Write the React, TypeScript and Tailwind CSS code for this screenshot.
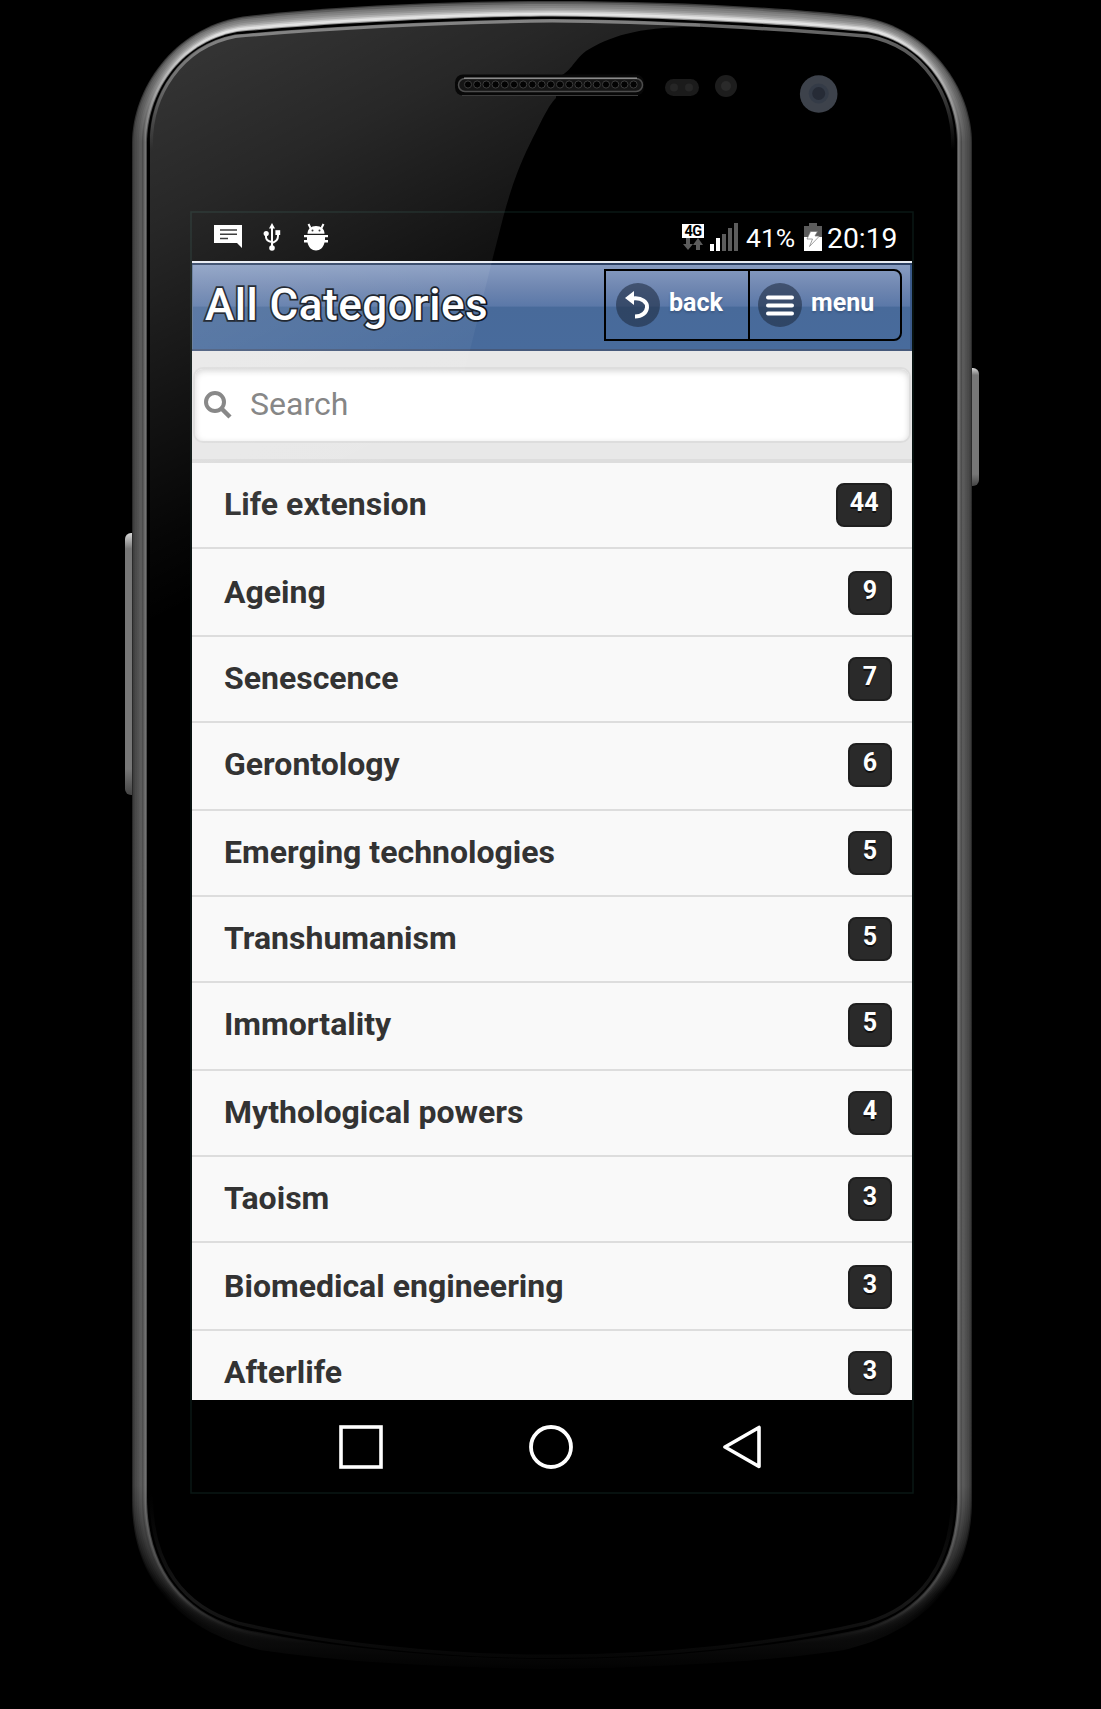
import { ReactNode } from "react";

interface ICategory {
  name: string;
  count: number;
  rowClass: string;
}

const SHORT_ROW = "h-[86px] pt-5";
const TALL_ROW = "h-[88px] pt-5";
const SHIFTED_ROW = "h-[88px] pt-[22px]";

const categories: ICategory[] = [
  { name: "Life extension", count: 44, rowClass: SHORT_ROW },
  { name: "Ageing", count: 9, rowClass: SHIFTED_ROW },
  { name: "Senescence", count: 7, rowClass: SHORT_ROW },
  { name: "Gerontology", count: 6, rowClass: TALL_ROW },
  { name: "Emerging technologies", count: 5, rowClass: SHORT_ROW },
  { name: "Transhumanism", count: 5, rowClass: SHORT_ROW },
  { name: "Immortality", count: 5, rowClass: TALL_ROW },
  { name: "Mythological powers", count: 4, rowClass: SHORT_ROW },
  { name: "Taoism", count: 3, rowClass: SHORT_ROW },
  { name: "Biomedical engineering", count: 3, rowClass: SHIFTED_ROW },
  { name: "Afterlife", count: 3, rowClass: SHORT_ROW },
];

// left half of the body outline, going from the bottom centre to the top centre
const OUTER = [
  [552, 1669], [477, 1668], [350, 1664], [260, 1650],
  [190, 1633], [132, 1590], [132, 1500],
  [132, 1100], [132, 500], [132, 143],
  [132, 90], [172, 28], [243, 16.5],
  [330, 6], [450, 1], [552, 1],
];
const INNER = [
  [552, 1659], [450, 1659], [330, 1648], [243, 1629],
  [185, 1613], [147, 1570], [147, 1497],
  [147, 1100], [147, 500], [147, 143],
  [147, 95], [178, 43], [237, 32],
  [320, 24], [450, 17], [552, 16.5],
];

function outline(t: number) {
  const left = OUTER.map(([x, y], i) => [
    x + (INNER[i][0] - x) * t,
    y + (INNER[i][1] - y) * t,
  ]);
  const right = left
    .slice(0, -1)
    .reverse()
    .map(([x, y]) => [1104 - x, y]);
  const [first, ...rest] = [...left, ...right];
  return `M${first.join(" ")}C${rest.map((p) => p.join(" ")).join(" ")}Z`;
}

// t, top, side, lower corner
const rim: [number, string, string, string][] = [
  [0, "#3a3a3a", "#2c2c2c", "#020202"],
  [0.08, "#5e5e5e", "#444444", "#060606"],
  [0.2, "#787878", "#4a4a4a", "#0c0c0c"],
  [0.32, "#868686", "#505050", "#121212"],
  [0.45, "#979797", "#585858", "#181818"],
  [0.56, "#acacac", "#5c5c5c", "#1e1e1e"],
  [0.66, "#cacaca", "#4c4c4c", "#282828"],
  [0.76, "#e4e4e4", "#626262", "#3a3a3a"],
  [0.84, "#dedede", "#767676", "#444444"],
  [0.93, "#8c8c8c", "#4a4a4a", "#2a2a2a"],
];

function PhoneBody() {
  return (
    <svg
      className="absolute inset-0"
      width="1101"
      height="1709"
      viewBox="0 0 1101 1709"
    >
      <defs>
        {rim.map(([t, top, side, low]) => (
          <linearGradient
            key={t}
            id={`rim-${t * 100}`}
            gradientUnits="userSpaceOnUse"
            x1="0"
            y1="0"
            x2="0"
            y2="1669"
          >
            <stop offset="0.02" stopColor={top} />
            <stop offset="0.085" stopColor={side} />
            <stop offset="0.89" stopColor={side} stopOpacity="0.85" />
            <stop offset="0.955" stopColor={low} />
            <stop offset="0.985" stopColor="#0a0a0a" />
            <stop offset="1" stopColor="#020202" />
          </linearGradient>
        ))}
        <linearGradient id="key" x1="0" y1="0" x2="0" y2="1">
          <stop offset="0" stopColor="#d8d8d8" />
          <stop offset="0.06" stopColor="#777777" />
          <stop offset="0.9" stopColor="#777777" />
          <stop offset="1" stopColor="#444444" />
        </linearGradient>
        <linearGradient
          id="edge"
          gradientUnits="userSpaceOnUse"
          x1="0"
          y1="0"
          x2="0"
          y2="1660"
        >
          <stop offset="0.012" stopColor="#6c6c6c" />
          <stop offset="0.05" stopColor="#4a4a4a" />
          <stop offset="0.09" stopColor="#000000" />
          <stop offset="0.9" stopColor="#000000" />
          <stop offset="0.965" stopColor="#181818" />
          <stop offset="1" stopColor="#050505" />
        </linearGradient>
      </defs>

      <rect x="125" y="533" width="14" height="262" rx="6" fill="url(#key)" />
      <rect x="965" y="368" width="14" height="118" rx="6" fill="url(#key)" />

      <path d={outline(0)} fill="#000000" />
      {rim.map(([t]) => (
        <path key={t} d={outline(t)} fill={`url(#rim-${t * 100})`} />
      ))}
      <path d={outline(1)} fill="#000000" />
      <path
        d={outline(1.28)}
        fill="#000000"
        stroke="url(#edge)"
        strokeWidth="3.5"
      />
    </svg>
  );
}

function Glass() {
  return (
    <svg
      className="pointer-events-none absolute inset-0"
      width="1101"
      height="1709"
      viewBox="0 0 1101 1709"
    >
      <defs>
        <linearGradient
          id="shine"
          gradientUnits="userSpaceOnUse"
          x1="200"
          y1="60"
          x2="416"
          y2="492"
        >
          <stop offset="0" stopColor="#ffffff" stopOpacity="0.2" />
          <stop offset="0.26" stopColor="#ffffff" stopOpacity="0.155" />
          <stop offset="0.61" stopColor="#ffffff" stopOpacity="0.075" />
          <stop offset="0.85" stopColor="#ffffff" stopOpacity="0.025" />
          <stop offset="1" stopColor="#ffffff" stopOpacity="0" />
        </linearGradient>
        <clipPath id="glass">
          <path d={outline(1.2)} />
        </clipPath>
      </defs>
      <rect
        x="191"
        y="212"
        width="722"
        height="1281"
        fill="none"
        stroke="#0a1714"
        strokeWidth="1.5"
      />
      <path
        clipPath="url(#glass)"
        fill="url(#shine)"
        d="M140 0H700V27C640 26 610 36 586 51C572 62 572 72 556 78V98C548 106 542 120 526 152C514 178 508 200 503 218L493 257L470 350L430 500L380 700H140Z"
      />

      <rect x="455" y="74.5" width="189" height="21" rx="8" fill="#080808" />
      <path d="M462 95.5H638" stroke="#3c3c3c" strokeWidth="1" />
      <rect
        x="458.5"
        y="78.5"
        width="184"
        height="13"
        rx="6.5"
        fill="#151515"
        stroke="#4d4d4d"
        strokeWidth="1.5"
      />
      <path d="M464 78.3H637" stroke="#8a8a8a" strokeWidth="1.5" />
      {Array.from({ length: 19 }, (_, i) => (
        <circle
          key={i}
          cx={468 + i * 9.2}
          cy="84.5"
          r="3.6"
          fill="#030303"
          stroke="#3d3d3d"
          strokeWidth="1"
        />
      ))}

      <rect x="665" y="79" width="34" height="17" rx="8.5" fill="#1b1b1b" />
      <circle cx="674" cy="87.5" r="4" fill="#262626" />
      <circle cx="689" cy="87.5" r="4" fill="#262626" />
      <circle cx="726" cy="86" r="11" fill="#1d1d1d" />
      <circle cx="726" cy="86" r="5" fill="#2a2a2a" />
      <circle cx="818.7" cy="94" r="18.8" fill="#3d424b" />
      <circle cx="818.7" cy="93.5" r="10" fill="#343b47" />
      <circle cx="818.7" cy="93.5" r="6.5" fill="#262b36" />
    </svg>
  );
}

function StatusBar() {
  return (
    <div className="flex h-12 items-start pt-[10px] pl-[22px] text-white">
      <svg width="28" height="24" viewBox="0 0 28 24" className="mt-0.5">
        <path d="M0 0H28V23L23 18H0Z" fill="#fff" />
        <path d="M6 5H23M6 9.3H23M6 13.6H14" stroke="#1f1f1f" strokeWidth="1.5" />
      </svg>
      <svg width="18" height="28" viewBox="0 0 18 28" className="ml-[21px]">
        <path
          d="M9 3V26M3 11V14Q3 18 9 19M15 10V13Q15 18 9 20"
          fill="none"
          stroke="#fff"
          strokeWidth="2"
        />
        <path d="M9 0L12 5.5H6Z" fill="#fff" />
        <circle cx="3.2" cy="10.5" r="2.6" fill="#fff" />
        <rect x="12.4" y="7.2" width="4.8" height="4.8" fill="#fff" />
        <circle cx="9" cy="25" r="2.8" fill="#fff" />
      </svg>
      <svg width="24" height="28" viewBox="0 0 24 28" className="ml-[23px]">
        <path d="M6.5 5L4.5 1M17.5 5L19.5 1" stroke="#fff" strokeWidth="2" />
        <path d="M3.5 10.8C3.5 6 7 3 12 3S20.5 6 20.5 10.8Z" fill="#fff" />
        <path
          d="M0 12H24V14.2H21V17H24V19.5H20.5C19.5 24.5 16 27.5 12 27.5S4.5 24.5 3.5 19.5H0V17H3V14.2H0Z"
          fill="#fff"
        />
        <circle cx="8.5" cy="7.6" r="1" fill="#222" />
        <circle cx="15.5" cy="7.6" r="1" fill="#222" />
      </svg>

      <div className="ml-[354px] flex w-[22px] flex-col items-center">
        <span className="mt-px h-[14px] w-full bg-white text-center text-[14.5px] leading-[15px] font-bold tracking-[-0.5px] text-black">
          4G
        </span>
        <svg width="20" height="13" viewBox="0 0 20 13">
          <path d="M3 0H7V6H10L5 12L0 6H3Z" fill="#5c5c5c" />
          <path d="M13 12V7H10L15 0L20 7H17V12Z" fill="#5c5c5c" />
        </svg>
      </div>
      <svg width="28" height="28" viewBox="0 0 28 28" className="ml-[6px]">
        <path d="M0 21H4V28H0ZM6 15H10V28H6Z" fill="#fff" />
        <path d="M12 11H16V28H12ZM18 5H22V28H18ZM24 0H28V28H24Z" fill="#5c5c5c" />
      </svg>
      <span className="mt-[-1px] ml-2 w-[49px] text-[26.5px] leading-8 whitespace-nowrap">
        41%
      </span>
      <svg width="18" height="28" viewBox="0 0 18 28" className="ml-[9px]">
        <path d="M5 0H13V3H18V14H0V3H5Z" fill="#5c5c5c" />
        <path d="M0 14H18V28H0Z" fill="#fff" />
        <path
          d="M6.5 8.5H13.5L11 13H15.5L5.5 23.5L8.5 16H3Z"
          fill="#fff"
          stroke="#777"
          strokeWidth="0.7"
        />
      </svg>
      <span className="mt-[-1px] ml-[5px] text-[28.3px] leading-[33px]">
        20:19
      </span>
    </div>
  );
}

interface HeaderButtonProps {
  label: string;
  className: string;
  children: ReactNode;
}

function HeaderButton({ label, className, children }: HeaderButtonProps) {
  return (
    <button
      className={`flex h-[72px] items-start border-2 border-black pt-3 ${className}`}
    >
      <span className="flex size-11 items-center justify-center rounded-full bg-[#1f2d42]/60">
        {children}
      </span>
      <span className="ml-[9px] text-[25px] leading-[40px] font-bold text-white [text-shadow:0_2px_2px_#3e5a84]">
        {label}
      </span>
    </button>
  );
}

function Header() {
  return (
    <header className="flex h-[88px] items-start border-t-2 border-b-2 border-t-[#2b3f61] border-b-[#46597b] bg-[linear-gradient(#879cc1_0%,#7188b2_25%,#5b78a8_49%,#486a9a_50%,#486b9c_100%)] pr-[10px] pl-3 shadow-[inset_1px_0_0_#5d7596,inset_-2px_0_0_#3b5a8a]">
      <h1 className="mt-4 ml-px flex-1 text-[44px] leading-[48px] font-medium tracking-[0.5px] whitespace-nowrap text-white [-webkit-text-stroke:3.4px_#0d1420] [paint-order:stroke_fill]">
        All Categories
      </h1>
      <div className="mt-1 flex">
        <HeaderButton label="back" className="w-[146px] pl-[10px]">
          <svg width="26" height="30" viewBox="0 0 26 30">
            <path
              d="M8 8.5C17 7.5 22.5 12 22 17.5C21.5 22.5 17 26.5 10 26.5"
              fill="none"
              stroke="#fff"
              strokeWidth="4"
            />
            <path d="M0 8L9 1V15Z" fill="#fff" />
          </svg>
        </HeaderButton>
        <HeaderButton
          label="menu"
          className="-ml-0.5 w-[154px] rounded-r-lg pl-2"
        >
          <svg width="28" height="21" viewBox="0 0 28 21">
            <path
              d="M2 2.5H26M2 10.5H26M2 18.5H26"
              stroke="#fff"
              strokeWidth="4"
              strokeLinecap="round"
            />
          </svg>
        </HeaderButton>
      </div>
    </header>
  );
}

function SearchBar() {
  return (
    <div className="h-[112px] border-b-4 border-[#dddddd] bg-[#e8e8e8] px-px pt-4">
      <div className="flex h-[76px] items-center rounded-[10px] border-2 border-[#dddddd] bg-white pl-[9px] shadow-[inset_0_2px_6px_#d4d4d4]">
        <svg width="28" height="28" viewBox="0 0 28 28">
          <circle
            cx="11"
            cy="11"
            r="9"
            fill="none"
            stroke="#808080"
            strokeWidth="4"
          />
          <path d="M17.5 17.5L26 26" stroke="#808080" strokeWidth="4.5" />
        </svg>
        <input
          type="text"
          placeholder="Search"
          className="mb-0.5 ml-[18px] flex-1 text-[32px] outline-none placeholder:text-[#808080]"
        />
      </div>
    </div>
  );
}

function CategoryList() {
  return (
    <ul className="flex-1 overflow-hidden bg-[#f9f9f9]">
      {categories.map((category) => (
        <li
          key={category.name}
          className={`flex items-start justify-between border-b-2 border-[#dddddd] pr-5 pl-8 ${category.rowClass}`}
        >
          <span className="text-[32px] leading-[42px] font-bold text-[#333333]">
            {category.name}
          </span>
          <span className="h-11 min-w-11 rounded-lg border-2 border-[#1f1f1f] bg-[#2a2a2a] px-[11.5px] text-center text-[25px] leading-9 font-bold text-white [text-shadow:0_2px_0_#111]">
            {category.count}
          </span>
        </li>
      ))}
    </ul>
  );
}

function NavBar() {
  return (
    <nav className="flex h-[93px] items-start pt-[25px] pl-[147px]">
      <svg width="44" height="44" viewBox="0 0 44 44">
        <rect
          x="2"
          y="2"
          width="40"
          height="40"
          fill="none"
          stroke="#fff"
          strokeWidth="3.6"
        />
      </svg>
      <svg width="44" height="44" viewBox="0 0 44 44" className="ml-[146px]">
        <circle
          cx="22"
          cy="22"
          r="20"
          fill="none"
          stroke="#fff"
          strokeWidth="3.8"
        />
      </svg>
      <svg width="38" height="44" viewBox="0 0 38 44" className="ml-[150px]">
        <path
          d="M2 22L36 2.5V41.5Z"
          fill="none"
          stroke="#fff"
          strokeWidth="3.6"
          strokeLinejoin="round"
        />
      </svg>
    </nav>
  );
}

function App() {
  return (
    <div className="relative h-[1709px] w-[1101px] overflow-hidden bg-black pt-[213px] pl-[192px] font-[Roboto,sans-serif]">
      <PhoneBody />
      <div className="relative flex h-[1280px] w-[720px] flex-col bg-black">
        <StatusBar />
        <main className="flex min-h-0 flex-1 flex-col border-t-2 border-[#e8ecf2]">
          <Header />
          <SearchBar />
          <CategoryList />
        </main>
        <NavBar />
      </div>
      <Glass />
    </div>
  );
}

export default App;
